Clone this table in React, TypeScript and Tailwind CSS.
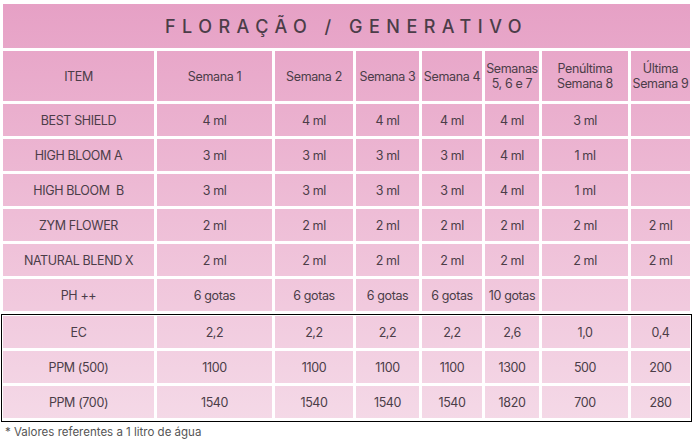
const cols = "grid grid-cols-[151px_115px_78px_63px_60px_54px_86px_59px] gap-[3px]";
const cell =
  "flex items-center justify-center text-center bg-fixed bg-linear-to-b from-[#e6a0c5] to-[#f5dce9] text-[12.5px] leading-[15px] tracking-[-0.03em] text-[#4b3d48]";

const header = [
  "ITEM",
  "Semana 1",
  "Semana 2",
  "Semana 3",
  "Semana 4",
  "Semanas 5, 6 e 7",
  "Penúltima Semana 8",
  "Última Semana 9",
];

const rows = [
  ["BEST SHIELD", "4 ml", "4 ml", "4 ml", "4 ml", "4 ml", "3 ml", ""],
  ["HIGH BLOOM A", "3 ml", "3 ml", "3 ml", "3 ml", "4 ml", "1 ml", ""],
  ["HIGH BLOOM  B", "3 ml", "3 ml", "3 ml", "3 ml", "4 ml", "1 ml", ""],
  ["ZYM FLOWER", "2 ml", "2 ml", "2 ml", "2 ml", "2 ml", "2 ml", "2 ml"],
  ["NATURAL BLEND X", "2 ml", "2 ml", "2 ml", "2 ml", "2 ml", "2 ml", "2 ml"],
  ["PH ++", "6 gotas", "6 gotas", "6 gotas", "6 gotas", "10 gotas", "", ""],
];

const boxed = [
  ["EC", "2,2", "2,2", "2,2", "2,2", "2,6", "1,0", "0,4"],
  ["PPM (500)", "1100", "1100", "1100", "1100", "1300", "500", "200"],
  ["PPM (700)", "1540", "1540", "1540", "1540", "1820", "700", "280"],
];

function Row({ values }: { values: string[] }) {
  return (
    <>
      {values.map((v, i) => (
        <div key={i} className={`${cell} h-[32px] whitespace-pre`}>
          {v}
        </div>
      ))}
    </>
  );
}

export default function App() {
  return (
    <div className="w-[700px] h-[442px] bg-white font-['Inter',sans-serif] pt-[4px] pl-[3px]">
      <div className="w-[687px] flex flex-col gap-[3px]">
        <div className={`${cell} h-[44px] text-[18px] font-medium tracking-[0.36em] text-[#4a3246]`}>
          FLORAÇÃO / GENERATIVO
        </div>
        <div className={cols}>
          {header.map((h, i) => (
            <div key={i} className={`${cell} h-[50px]`}>
              {h}
            </div>
          ))}
          {rows.map((r, i) => (
            <Row key={i} values={r} />
          ))}
        </div>
        <div className="-mx-[2px] border border-black px-[1px] pt-[1px] pb-[3px]">
          <div className={cols}>
            {boxed.map((r, i) => (
              <Row key={i} values={r} />
            ))}
          </div>
        </div>
      </div>
      <p className="mt-[3px] pl-[2px] text-[11.5px] leading-[14px] text-[#555]">
        * Valores referentes a 1 litro de água
      </p>
    </div>
  );
}
